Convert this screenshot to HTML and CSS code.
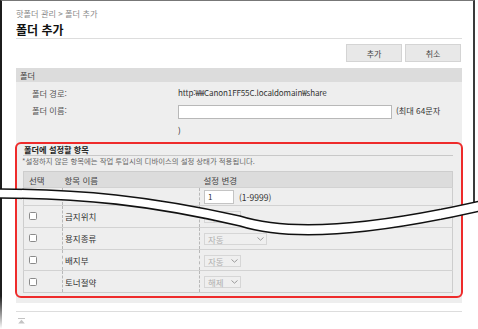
FILE: index.html
```html
<!DOCTYPE html>
<html lang="ko">
<head>
    <meta charset="UTF-8">
    <meta name="viewport" content="width=device-width, initial-scale=1.0">
    <title>폴더 추가</title>
    <link rel="stylesheet" href="styles.css">
</head>

<body>
<div class="window">
    <div class="crumb">핫폴더 관리 &gt; 폴더 추가</div>
    <h1 class="title">폴더 추가</h1>
    <div class="btn_row">
        <button class="btn">추가</button>
        <button class="btn">취소</button>
    </div>

    <div class="panel">
        <div class="sec_head">폴더</div>
        <div class="field field_path">
            <div class="label">폴더 경로:</div>
            <div class="value path">http:₩₩Canon1FF55C.localdomain₩share</div>
        </div>
        <div class="field field_name">
            <div class="label">폴더 이름:</div>
            <div class="value"><input class="name_input" type="text">(최대 64문자<br>)</div>
        </div>

        <div class="mark">
            <div class="mark_title">폴더에 설정할 항목</div>
            <div class="mark_note">*설정하지 않은 항목에는 작업 투입시의 디바이스의 설정 상태가 적용됩니다.</div>
            <table class="items">
                <tr class="head">
                    <th class="c1">선택</th>
                    <th class="c2">항목 이름</th>
                    <th class="c3">설정 변경</th>
                </tr>
                <tr class="first">
                    <td class="c1"></td>
                    <td class="c2"></td>
                    <td class="c3"><input class="num" type="text" value="1"><span class="range">(1-9999)</span></td>
                </tr>
                <tr>
                    <td class="c1"><input class="chk" type="checkbox"></td>
                    <td class="c2">금지위치</td>
                    <td class="c3"><span class="sel">자동<svg width="7" height="4" viewBox="0 0 7 4"><path d="M0.5 0.5 L3.5 3.2 L6.5 0.5" fill="none" stroke="#999" stroke-width="1"/></svg></span></td>
                </tr>
                <tr>
                    <td class="c1"><input class="chk" type="checkbox"></td>
                    <td class="c2">용지종류</td>
                    <td class="c3"><span class="sel sel_wide">자동<svg width="7" height="4" viewBox="0 0 7 4"><path d="M0.5 0.5 L3.5 3.2 L6.5 0.5" fill="none" stroke="#999" stroke-width="1"/></svg></span></td>
                </tr>
                <tr>
                    <td class="c1"><input class="chk" type="checkbox"></td>
                    <td class="c2">배지부</td>
                    <td class="c3"><span class="sel">자동<svg width="7" height="4" viewBox="0 0 7 4"><path d="M0.5 0.5 L3.5 3.2 L6.5 0.5" fill="none" stroke="#999" stroke-width="1"/></svg></span></td>
                </tr>
                <tr>
                    <td class="c1"><input class="chk" type="checkbox"></td>
                    <td class="c2">토너절약</td>
                    <td class="c3"><span class="sel">해제<svg width="7" height="4" viewBox="0 0 7 4"><path d="M0.5 0.5 L3.5 3.2 L6.5 0.5" fill="none" stroke="#999" stroke-width="1"/></svg></span></td>
                </tr>
            </table>
        </div>
    </div>

    <div class="foot">
        <svg class="to_top" width="7" height="6" viewBox="0 0 7 6">
            <rect x="0" y="0" width="7" height="1" fill="#c4c4c4"/>
            <path d="M3.5 1.8 L6.8 5.6 L0.2 5.6 Z" fill="#c4c4c4"/>
        </svg>
    </div>
</div>

<!-- torn edge drawn over the page -->
<svg class="cut" width="478" height="329" viewBox="0 0 478 329">
    <defs>
        <linearGradient id="fade" x1="0" y1="0" x2="0" y2="1">
            <stop offset="0" stop-color="#fff" stop-opacity="0"/>
            <stop offset="1" stop-color="#fff" stop-opacity="1"/>
        </linearGradient>
    </defs>
    <rect x="472" y="205" width="6" height="124" fill="#fff"/>
    <rect x="0" y="296" width="3" height="33" fill="url(#fade)"/>
    <path d="M-2 189 C80 189 150 196 240 216 C290 232 370 226 480 201 L480 211 C370 236 290 242 240 226 C150 205 80 198 -2 198 Z" fill="#fff"/>
    <path d="M-2 189 C80 189 150 196 240 216 C290 232 370 226 480 201" fill="none" stroke="#111" stroke-width="1.6"/>
    <path d="M-2 198 C80 198 150 205 240 226 C290 242 370 236 480 211" fill="none" stroke="#111" stroke-width="1.6"/>
</svg>
</body>
</html>
```

FILE: styles.css
```css
* {
    margin: 0;
    padding: 0;
    box-sizing: border-box;
}

body {
    position: relative;
    width: 478px;
    height: 329px;
    overflow: hidden;
    background: #fff;
    font-family: "Noto Sans CJK KR", "Noto Sans", sans-serif;
    font-size: 8.2px;
    color: #444;
}

.window {
    width: 475px;
    height: 329px;
    padding: 6px 11px 0 14px;
    border-top: 1px solid #777;
    border-left: 2px solid #1c1c1c;
    border-right: 2px solid #3a3a3a;
}

.crumb {
    line-height: 12px;
    color: #8a8a8a;
}

.title {
    margin-top: 3px;
    font-size: 12px;
    font-weight: bold;
    line-height: 16px;
    color: #111;
    border-bottom: 1px solid #ddd;
}

.btn_row {
    display: flex;
    justify-content: flex-end;
    gap: 3px;
    margin-top: 5px;
    padding-right: 1px;
}

.btn {
    width: 56px;
    height: 18px;
    font-family: inherit;
    font-size: 8px;
    color: #444;
    background: #e8e8e8;
    border: 1px solid #d4d4d4;
}

.panel {
    margin-top: 6px;
    padding-bottom: 5px;
    background: #eee;
}

.sec_head {
    height: 14px;
    line-height: 14px;
    padding-left: 4px;
    background: #dcdcdc;
}

.field {
    display: flex;
    padding-left: 16px;
}

.field_path {
    margin-top: 4px;
    line-height: 14px;
}

.field_name {
    line-height: 20px;
}

.label {
    width: 146px;
    color: #555;
}

.value {
    color: #333;
}

.path {
    font-size: 8px;
    letter-spacing: -0.1px;
}

.name_input {
    width: 214px;
    height: 14px;
    margin-right: 4px;
    vertical-align: middle;
    background: #fff;
    border: 1px solid #b8b8b8;
}

.mark {
    margin: 2px -1px 0;
    padding: 0 8px 3px 6px;
    border: 2px solid #ee2b2b;
    border-radius: 6px;
}

.mark_title {
    padding-left: 1px;
    font-weight: bold;
    line-height: 11px;
    color: #222;
    border-bottom: 1px solid #c8c8c8;
}

.mark_note {
    margin-left: -1px;
    font-size: 7.4px;
    line-height: 10px;
    color: #666;
}

.items {
    width: 100%;
    margin-top: 5px;
    border-collapse: collapse;
    border: 1px solid #cdcdcd;
    font-size: 8.5px;
}

.items tr {
    height: 21.75px;
}

.items tr.head {
    height: 16px;
}

.items tr.first {
    height: 18px;
}

.items th {
    font-weight: normal;
    text-align: left;
    background: #dcdcdc;
    color: #444;
}

.items td {
    vertical-align: middle;
    border-top: 1px solid #d2d2d2;
    color: #333;
}

.c1 {
    width: 39px;
    padding-left: 5px;
}

.c2 {
    width: 137px;
    padding-left: 2px;
}

.c3 {
    padding-left: 4px;
}

.items td.c2,
.items td.c3 {
    border-left: 1px dashed #b8b8b8;
}

.chk {
    display: block;
    width: 8px;
    height: 8px;
    appearance: none;
    background: #fff;
    border: 1px solid #8a8a8a;
    border-radius: 1.5px;
}

.num {
    width: 30px;
    height: 14px;
    padding-left: 3px;
    vertical-align: middle;
    font-family: inherit;
    font-size: 8px;
    color: #333;
    background: #fff;
    border: 1px solid #c4c4c4;
}

.range {
    margin-left: 5px;
    vertical-align: middle;
}

.sel {
    display: inline-flex;
    align-items: center;
    justify-content: space-between;
    width: 37px;
    height: 12px;
    padding: 0 2px 0 3px;
    vertical-align: middle;
    color: #b0b0b0;
    background: #efefef;
    border: 1px solid #d6d6d6;
}

.sel_wide {
    width: 63px;
}

.foot {
    margin-top: 8px;
    padding: 6px 0 0 2px;
    border-top: 1px solid #ddd;
}

.to_top {
    display: block;
}

.cut {
    position: absolute;
    top: 0;
    left: 0;
    pointer-events: none;
}
```
